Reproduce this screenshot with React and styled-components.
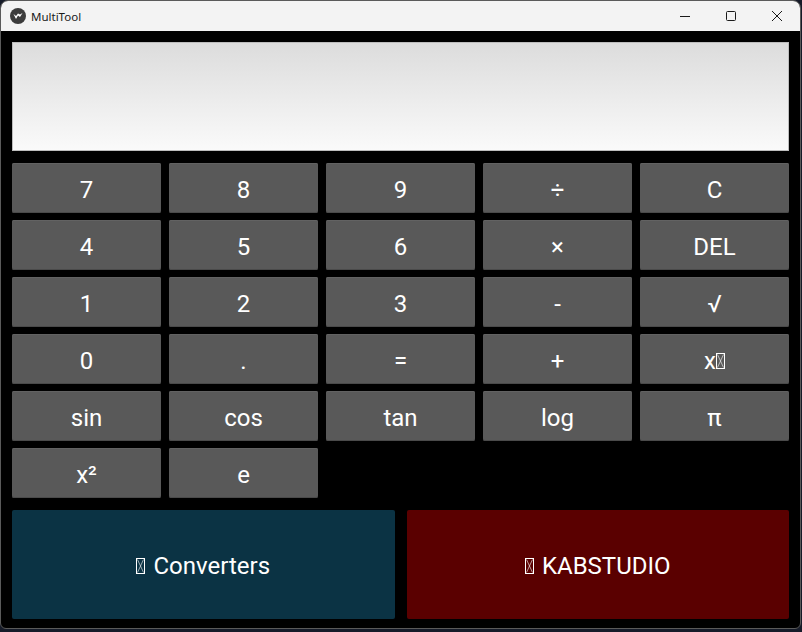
import React from "react";
import styled, { createGlobalStyle } from "styled-components";

const GlobalStyle = createGlobalStyle`
  html, body {
    margin: 0;
    padding: 0;
    background: #161b29;
  }
  * { box-sizing: border-box; }
`;

const Window = styled.div`
  width: 801px;
  height: 629px;
  border: 1px solid #5a5a5a;
  border-radius: 8px 8px 6px 6px;
  overflow: hidden;
  display: flex;
  flex-direction: column;
  background: #000;
`;

const TitleBar = styled.div`
  height: 30px;
  flex-shrink: 0;
  background: #f3f3f3;
  display: flex;
  align-items: center;
  font-family: "Noto Sans", "Open Sans", sans-serif;
  font-size: 11.5px;
  color: #1a1a1a;
`;

const AppIcon = styled.div`
  width: 16px;
  height: 16px;
  margin: 0 5px 0 9px;
  display: flex;
`;

const TitleText = styled.span`
  flex: 1;
`;

const WinButton = styled.div`
  width: 46px;
  height: 30px;
  display: flex;
  align-items: center;
  justify-content: center;
`;

const Content = styled.div`
  flex: 1;
  padding: 11px 11px 9px 11px;
  display: flex;
  flex-direction: column;
  gap: 12px;
`;

const Display = styled.div`
  height: 109px;
  border: 1px solid #bdbdbd;
  background: linear-gradient(to bottom, #dcdcdc, #fafafa);
`;

const Keypad = styled.div`
  display: grid;
  grid-template-columns: repeat(5, 1fr);
  grid-auto-rows: 50px;
  gap: 7px 8px;
`;

const Key = styled.button`
  border: none;
  border-radius: 2px;
  background: #595959;
  box-shadow: inset 0 1px 0 #626262, inset 0 -1px 0 #4a4a4a;
  color: #fff;
  font-family: Roboto, "Noto Sans", sans-serif;
  font-size: 24px;
  padding: 3px 0 0;
  display: flex;
  align-items: center;
  justify-content: center;
`;

const BigRow = styled.div`
  flex: 1;
  display: grid;
  grid-template-columns: 1fr 1fr;
  gap: 12px;
`;

const BigButton = styled.button`
  border: none;
  border-radius: 2px;
  background: ${(p) => p.$bg};
  color: #fff;
  font-family: Roboto, "Noto Sans", sans-serif;
  font-size: 24px;
  padding: 2px 0 0;
  display: flex;
  align-items: center;
  justify-content: center;
  gap: 8px;
`;

const Tofu = () => (
  <svg width="9" height="16" viewBox="0 0 9 16" style={{ marginTop: 1 }}>
    <rect x="0.5" y="0.5" width="8" height="15" fill="none" stroke="#fff" strokeWidth="1" />
    <path d="M1.5 1.5 L7.5 14.5 M7.5 1.5 L1.5 14.5" stroke="#fff" strokeWidth="0.6" />
  </svg>
);

const keys = [
  "7", "8", "9", "÷", "C",
  "4", "5", "6", "×", "DEL",
  "1", "2", "3", "-", "√",
  "0", ".", "=", "+", "xʸ",
  "sin", "cos", "tan", "log", "π",
  "x²", "e",
];

export default function App() {
  return (
    <>
      <GlobalStyle />
      <Window>
        <TitleBar>
          <AppIcon>
            <svg width="16" height="16" viewBox="0 0 16 16">
              <circle cx="8" cy="8" r="8" fill="#3c3c3c" />
              <path d="M3.5 6 L6 11 L8 7.5 L10 9 L12.5 5 L10 6.5 L8 5.5 L6 8 Z" fill="#fff" />
            </svg>
          </AppIcon>
          <TitleText>MultiTool</TitleText>
          <WinButton>
            <svg width="10" height="10" viewBox="0 0 10 10">
              <path d="M0 5.5 H10" stroke="#1a1a1a" strokeWidth="1" />
            </svg>
          </WinButton>
          <WinButton>
            <svg width="10" height="10" viewBox="0 0 10 10">
              <rect x="0.5" y="0.5" width="9" height="9" rx="1" fill="none" stroke="#1a1a1a" strokeWidth="1" />
            </svg>
          </WinButton>
          <WinButton>
            <svg width="10" height="10" viewBox="0 0 10 10">
              <path d="M0 0 L10 10 M10 0 L0 10" stroke="#1a1a1a" strokeWidth="1" />
            </svg>
          </WinButton>
        </TitleBar>
        <Content>
          <Display />
          <Keypad>
            {keys.map((k) =>
              k === "xʸ" ? (
                <Key key={k}>
                  x<Tofu />
                </Key>
              ) : (
                <Key key={k}>{k}</Key>
              )
            )}
          </Keypad>
          <BigRow>
            <BigButton $bg="#0b3344">
              <Tofu /> Converters
            </BigButton>
            <BigButton $bg="#5a0000">
              <Tofu /> KABSTUDIO
            </BigButton>
          </BigRow>
        </Content>
      </Window>
    </>
  );
}
